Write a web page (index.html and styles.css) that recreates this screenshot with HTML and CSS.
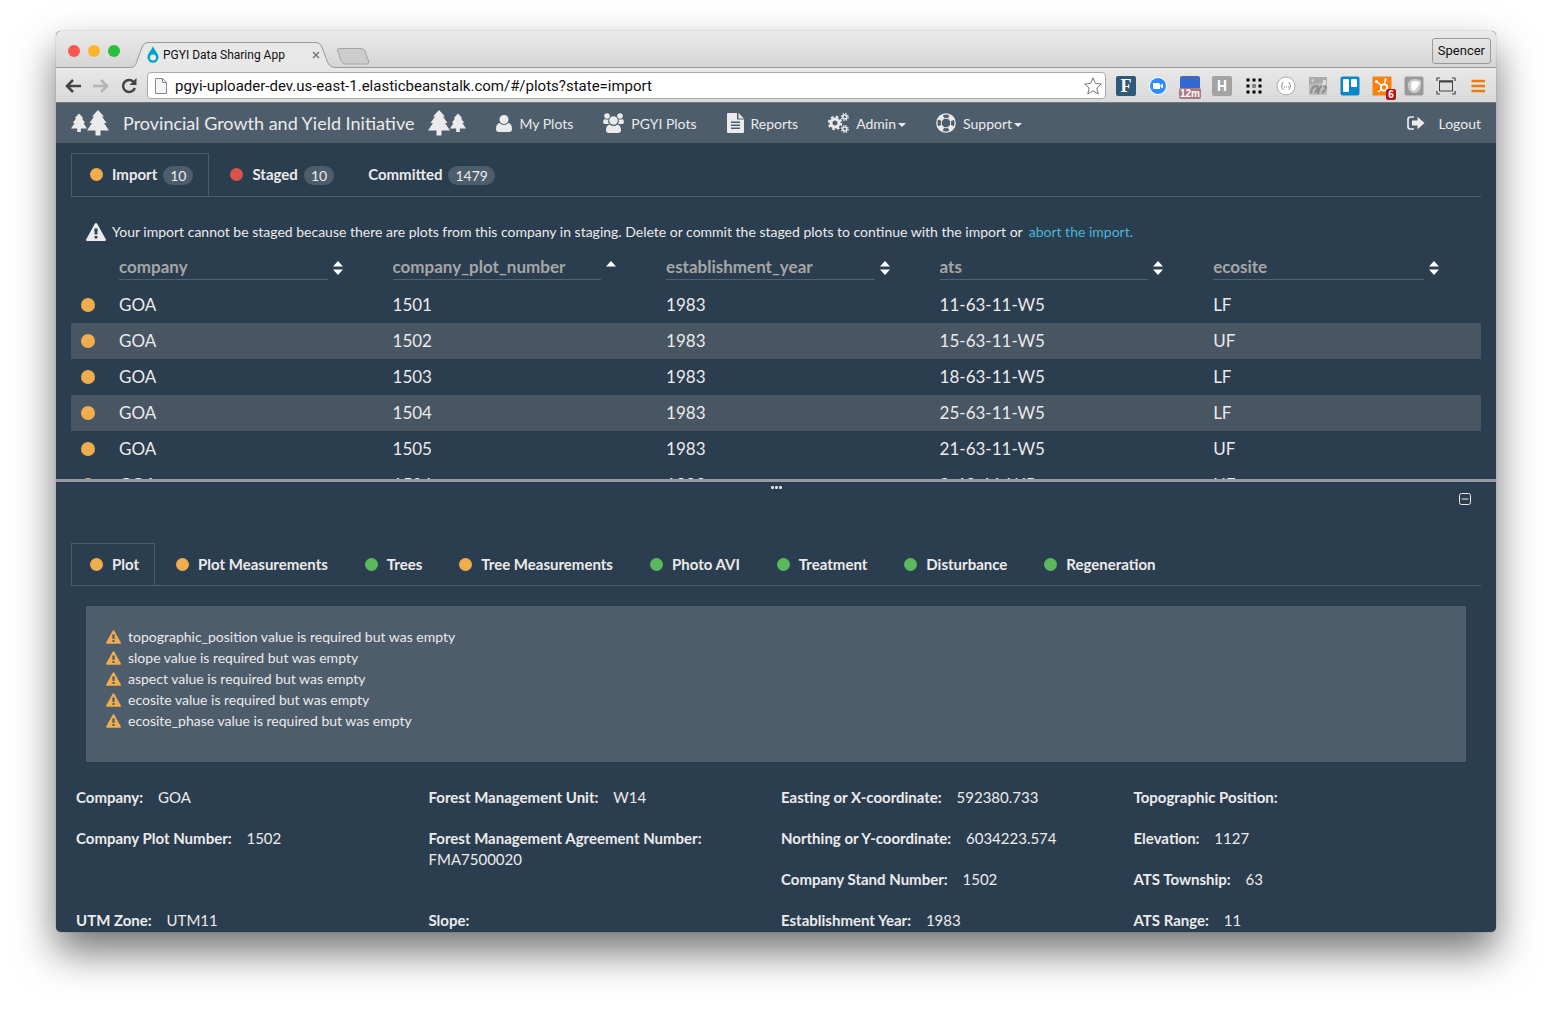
FILE: index.html
```html
<!DOCTYPE html>
<html lang="en">
<head>
<meta charset="utf-8">
<title>PGYI Data Sharing App</title>
<link rel="stylesheet" href="styles.css">
</head>
<body>
<svg class="defs" width="0" height="0" aria-hidden="true">
  <symbol id="tree" viewBox="0 0 22 26"><path d="M11 0 17 6.500H15L19.500 13H17L22 20.500H13.500V25.500H8.500V20.500H0L5 13H2.500L7 6.500H5Z"/></symbol>
  <symbol id="warn" viewBox="0 0 20 18"><path fill-rule="evenodd" d="M10 0Q10.800 0 11.300.9L19.800 16.300Q20.300 18 18.700 18H1.300Q-.3 18 .2 16.300L8.700.9Q9.200 0 10 0ZM8.300 5.500 8.700 11.500H11.300L11.700 5.500ZM8.600 13V15.600H11.400V13Z"/></symbol>
  <symbol id="sort" viewBox="0 0 10 14"><path d="M5 0 10 5.500H0ZM0 8.500H10L5 14Z"/></symbol>
  <symbol id="asc" viewBox="0 0 10 14"><path d="M5 0 10 5.500H0Z"/></symbol>
</svg>
<div class="window">
  <div class="titlebar">
    <div class="lights"><i class="light close"></i><i class="light min"></i><i class="light max"></i></div>
    <div class="browser-tab">
      <svg class="tab-shape" viewBox="0 0 208 26"><path d="M0 25.500C5 25.500 5.500 23 7 19L12.500 4Q14 .5 18 .5H186Q190 .5 191.500 4L198 21Q200 25.500 206 25.500V26H0Z" fill="#e8e8e8"/><path d="M0 25.500C5 25.500 5.500 23 7 19L12.500 4Q14 .5 18 .5H186Q190 .5 191.500 4L198 21Q200 25.500 206 25.500" fill="none" stroke="#999"/></svg>
      <svg width="12" height="17" viewBox="0 0 12 17"><path d="M6 0C7 4 11.500 7 11.500 11.300A5.500 5.500 0 0 1 .5 11.300C.5 7 5 4 6 0Z" fill="#00a3cc"/><circle cx="6" cy="11.500" r="3" fill="#eee"/></svg>
      <span class="tab-title">PGYI Data Sharing App</span>
      <button class="tab-close" aria-label="Close tab"><svg width="8" height="8" viewBox="0 0 8 8"><path d="M1 1 7 7M7 1 1 7" stroke="#777" stroke-width="1.500"/></svg></button>
    </div>
    <button class="new-tab" aria-label="New tab"><svg width="34" height="17" viewBox="0 0 34 17"><path d="M3 .5H25Q28 .5 29 3L32.500 13Q33 16 31 16H9Q6.500 16 5.500 13.500L1.500 3Q.5 .5 3 .5Z" fill="#ccc" stroke="#a3a3a3"/></svg></button>
    <button class="profile">Spencer</button>
  </div>
  <div class="toolbar">
    <div class="history">
      <button aria-label="Back"><svg width="16" height="14" viewBox="0 0 16 14"><path d="M8 1 2 7 8 13M2 7H16" fill="none" stroke="#444" stroke-width="2.500"/></svg></button>
      <button aria-label="Forward"><svg width="16" height="14" viewBox="0 0 16 14"><path d="M8 1 14 7 8 13M14 7H0" fill="none" stroke="#b5b5b5" stroke-width="2.500"/></svg></button>
      <button aria-label="Reload"><svg width="16" height="16" viewBox="0 0 16 16"><path d="M13 4.500A6 6 0 1 0 13.800 10" fill="none" stroke="#444" stroke-width="2.500"/><path d="M15.500 0V7H8.500Z" fill="#444"/></svg></button>
    </div>
    <div class="address">
      <svg width="12" height="16" viewBox="0 0 12 16"><path d="M.5.5H7.500L11.500 4.500V15.500H.5ZM7.500.5V4.500H11.500" fill="#f5f5f5" stroke="#888"/></svg>
      <input class="url" aria-label="Address" value="pgyi-uploader-dev.us-east-1.elasticbeanstalk.com/#/plots?state=import">
      <svg width="18" height="18" viewBox="0 0 18 18"><path d="M9 .8 11.400 6.500 17.400 7 12.800 11 14.200 17 9 13.700 3.800 17 5.200 11 .6 7 6.600 6.500Z" fill="#fff" stroke="#777"/></svg>
    </div>
    <div class="extensions">
      <span class="ext ext-f">F</span>
      <svg class="ext" viewBox="0 0 20 20"><circle cx="10" cy="10" r="9" fill="#fff"/><circle cx="10" cy="10" r="8" fill="#2d8cff"/><path d="M5 7H10.500Q12 7 12 8.500V13H6.500Q5 13 5 11.500ZM12.500 9 15 7.500V12.500L12.500 11Z" fill="#fff"/></svg>
      <span class="ext ext-cal"><span class="badge-cal">12m</span></span>
      <span class="ext ext-h">H</span>
      <svg class="ext" viewBox="0 0 20 20"><path d="M2.500 4H18M2.500 10H18M2.500 16H18" stroke="#000" stroke-width="3" stroke-dasharray="3 3"/><rect x="8.500" y="8.500" width="3" height="3" fill="#888"/></svg>
      <svg class="ext" viewBox="0 0 20 20"><circle cx="10" cy="10" r="9" fill="#fff" stroke="#aaa"/><path d="M7.500 6.500Q6 6.500 6 8.500T5 10Q6 10 6 11.500T7.500 13.500M12.500 6.500Q14 6.500 14 8.500T15 10Q14 10 14 11.500T12.500 13.500" fill="none" stroke="#888"/><path d="M8 11H13" stroke="#888" stroke-dasharray="1 1"/></svg>
      <svg class="ext" viewBox="0 0 20 20"><path d="M1 1H19V7L1 9Z" fill="#aaa"/><path d="M1 9 19 6V19H1Z" fill="#bbb"/><path d="M3 17Q4 10 8 10T7 17M10 18Q11 9 16 10T14 17" fill="none" stroke="#8c8c8c" stroke-width="2"/><path d="M3 4 6 3 5 6ZM15 4H18V8L14 11Z" fill="#ddd"/></svg>
      <svg class="ext" viewBox="0 0 20 20"><rect x=".5" y=".5" width="19" height="19" rx="2" fill="#0a86cd"/><rect x="3" y="3" width="6" height="13" rx="1" fill="#fff"/><rect x="11" y="3" width="6" height="8" rx="1" fill="#fff"/></svg>
      <span class="ext ext-hub"><svg viewBox="0 0 20 20" width="20" height="20"><rect x=".5" y=".5" width="19" height="19" fill="#f8820d"/><circle cx="12" cy="11.500" r="3.200" fill="none" stroke="#fff" stroke-width="1.800"/><path d="M12.500 8 13.500 4M9.500 9.500 5 6M9.500 13.500 6 16" stroke="#fff" stroke-width="1.500"/><circle cx="4.500" cy="5.500" r="1.500" fill="#fff"/><circle cx="13.500" cy="3.500" r="1.200" fill="#fff"/></svg><span class="badge-hub">6</span></span>
      <svg class="ext" viewBox="0 0 20 20"><rect x=".5" y=".5" width="19" height="19" rx="2" fill="#999"/><path d="M4 11Q3 3 11 3T17 9Q16 17 11 17Q5 17 4 11Z" fill="#ccc"/><path d="M7 11Q6 4 12 5T14 10Q11 16 8 14Z" fill="#fff"/></svg>
      <svg class="ext" viewBox="0 0 20 20"><rect x="3.500" y="5" width="13" height="10" fill="none" stroke="#444"/><path d="M3 5.500H17" stroke="#444" stroke-width="2"/><path d="M1 5V2H4M16 2H19V5M19 15V18H16M4 18H1V15" fill="none" stroke="#444" stroke-width="1.200"/></svg>
      <svg class="ext" viewBox="0 0 20 20"><path d="M3.500 5H17M3.500 10H17M3.500 15H17" stroke="#ee7a0c" stroke-width="2.500"/></svg>
    </div>
  </div>

  <nav class="navbar">
    <a class="brand" href="#">
      <span class="trees"><svg class="tree-sm"><use href="#tree"/></svg><svg class="tree-lg"><use href="#tree"/></svg></span>
      <span>Provincial Growth and Yield Initiative</span>
      <span class="trees"><svg class="tree-lg"><use href="#tree"/></svg><svg class="tree-sm"><use href="#tree"/></svg></span>
    </a>
    <a class="nav-link" href="#"><svg width="16" height="17" viewBox="0 0 16 17"><circle cx="8" cy="4.500" r="4.500"/><path d="M3.500 8Q8 12 12.500 8Q16 9 16 14Q16 17 13 17H3Q0 17 0 14Q0 9 3.500 8Z"/></svg>My Plots</a>
    <a class="nav-link" href="#"><svg width="21" height="20" viewBox="0 0 21 20"><circle cx="4" cy="3" r="2.800"/><circle cx="17" cy="3" r="2.800"/><circle cx="10.500" cy="7.500" r="4.300"/><path d="M2 6Q4 7.500 5.500 6Q4.500 9 6 11H2Q0 11 0 9Q0 6.500 2 6ZM19 6Q17 7.500 15.500 6Q16.500 9 15 11H19Q21 11 21 9Q21 6.500 19 6ZM6.500 11.500Q10.500 14.500 14.500 11.500Q18 12.500 18 17Q18 20 15 20H6Q3 20 3 17Q3 12.500 6.500 11.500Z"/></svg>PGYI Plots</a>
    <a class="nav-link" href="#"><svg width="17" height="20" viewBox="0 0 17 20"><path fill-rule="evenodd" d="M1 0H10V6.500H17V19Q17 20 16 20H1Q0 20 0 19V1Q0 0 1 0ZM4 8.500V10H13V8.500ZM4 11.500V13H13V11.500ZM4 14.500V16H13V14.500ZM11.500 0 17 5.500H11.500Z"/></svg>Reports</a>
    <a class="nav-link" href="#"><svg width="21" height="20" viewBox="0 0 21 20"><g fill="none" stroke="#ebebeb"><circle cx="7" cy="10" r="4" stroke-width="3"/><circle cx="7" cy="10" r="6.200" stroke-width="2" stroke-dasharray="2.600 2.270"/><circle cx="16.800" cy="4" r="2" stroke-width="1.600"/><circle cx="16.800" cy="4" r="3.400" stroke-width="1.200" stroke-dasharray="1.500 1.170"/><circle cx="16.800" cy="16" r="2" stroke-width="1.600"/><circle cx="16.800" cy="16" r="3.400" stroke-width="1.200" stroke-dasharray="1.500 1.170"/></g></svg><span>Admin<i class="caret"></i></span></a>
    <a class="nav-link" href="#"><svg width="20" height="20" viewBox="0 0 20 20"><g fill="none" stroke="#ebebeb"><circle cx="10" cy="10" r="9.200" stroke-width="1.300"/><circle cx="10" cy="10" r="4.800" stroke-width="1"/><circle cx="10" cy="10" r="7" stroke-width="4.400" stroke-dasharray="5.500 5.500" stroke-dashoffset="-2.700"/></g></svg><span>Support<i class="caret"></i></span></a>
    <a class="nav-link logout" href="#"><svg width="18" height="14" viewBox="0 0 18 14"><path d="M7 1H3.500Q1 1 1 3.500V10.500Q1 13 3.500 13H7" fill="none" stroke="#ebebeb" stroke-width="1.700"/><path d="M5 4.500H10.500V.8L17.500 7 10.500 13.200V9.500H5Z"/></svg>Logout</a>
  </nav>

  <section class="pane list-pane">
    <div class="tabs">
      <a class="tab active" href="#"><i class="dot orange"></i>Import<span class="badge">10</span></a>
      <a class="tab" href="#"><i class="dot red"></i>Staged<span class="badge">10</span></a>
      <a class="tab plain" href="#">Committed<span class="badge">1479</span></a>
    </div>
    <p class="notice"><svg class="notice-icon"><use href="#warn"/></svg><span>Your import cannot be staged because there are plots from this company in staging. Delete or commit the staged plots to continue with the import or</span><a href="#">abort the import.</a></p>
    <table class="plots">
      <colgroup><col class="status-col"><col class="data-col"><col class="data-col"><col class="data-col"><col class="data-col"><col></colgroup>
      <thead><tr><th></th>
        <th><div class="filter"><input aria-label="company" placeholder="company"><svg><use href="#sort"/></svg></div></th>
        <th><div class="filter"><input aria-label="company_plot_number" placeholder="company_plot_number"><svg><use href="#asc"/></svg></div></th>
        <th><div class="filter"><input aria-label="establishment_year" placeholder="establishment_year"><svg><use href="#sort"/></svg></div></th>
        <th><div class="filter"><input aria-label="ats" placeholder="ats"><svg><use href="#sort"/></svg></div></th>
        <th><div class="filter"><input aria-label="ecosite" placeholder="ecosite"><svg><use href="#sort"/></svg></div></th>
      </tr></thead>
      <tbody>
        <tr><td><i class="dot orange big"></i></td><td>GOA</td><td>1501</td><td>1983</td><td>11-63-11-W5</td><td>LF</td></tr>
        <tr><td><i class="dot orange big"></i></td><td>GOA</td><td>1502</td><td>1983</td><td>15-63-11-W5</td><td>UF</td></tr>
        <tr><td><i class="dot orange big"></i></td><td>GOA</td><td>1503</td><td>1983</td><td>18-63-11-W5</td><td>LF</td></tr>
        <tr><td><i class="dot orange big"></i></td><td>GOA</td><td>1504</td><td>1983</td><td>25-63-11-W5</td><td>LF</td></tr>
        <tr><td><i class="dot orange big"></i></td><td>GOA</td><td>1505</td><td>1983</td><td>21-63-11-W5</td><td>UF</td></tr>
        <tr class="cut"><td><i class="dot orange big"></i></td><td>GOA</td><td>1504</td><td>1983</td><td>2-63-11-W5</td><td>UF</td></tr>
      </tbody>
    </table>
  </section>

  <section class="pane detail-pane">
    <div class="grip"><i></i><i></i><i></i></div>
    <div class="pane-tools"><button aria-label="Collapse"><svg width="12" height="12" viewBox="0 0 12 12"><rect x=".5" y=".5" width="11" height="11" rx="2" fill="none" stroke="#ebebeb"/><path d="M2.500 6H9.500" stroke="#ebebeb"/></svg></button></div>
    <div class="tabs">
      <a class="tab active" href="#"><i class="dot orange"></i>Plot</a>
      <a class="tab" href="#"><i class="dot orange"></i>Plot Measurements</a>
      <a class="tab" href="#"><i class="dot green"></i>Trees</a>
      <a class="tab" href="#"><i class="dot orange"></i>Tree Measurements</a>
      <a class="tab" href="#"><i class="dot green"></i>Photo AVI</a>
      <a class="tab" href="#"><i class="dot green"></i>Treatment</a>
      <a class="tab" href="#"><i class="dot green"></i>Disturbance</a>
      <a class="tab" href="#"><i class="dot green"></i>Regeneration</a>
    </div>
    <ul class="warnings">
      <li><svg><use href="#warn"/></svg>topographic_position value is required but was empty</li>
      <li><svg><use href="#warn"/></svg>slope value is required but was empty</li>
      <li><svg><use href="#warn"/></svg>aspect value is required but was empty</li>
      <li><svg><use href="#warn"/></svg>ecosite value is required but was empty</li>
      <li><svg><use href="#warn"/></svg>ecosite_phase value is required but was empty</li>
    </ul>
    <dl class="fields">
      <div><dt>Company:</dt> <dd>GOA</dd></div>
      <div><dt>Forest Management Unit:</dt> <dd>W14</dd></div>
      <div><dt>Easting or X-coordinate:</dt> <dd>592380.733</dd></div>
      <div><dt>Topographic Position:</dt> <dd></dd></div>
      <div class="tall"><dt>Company Plot Number:</dt> <dd>1502</dd></div>
      <div class="tall"><dt>Forest Management Agreement Number:</dt> <dd>FMA7500020</dd></div>
      <div><dt>Northing or Y-coordinate:</dt> <dd>6034223.574</dd></div>
      <div><dt>Elevation:</dt> <dd>1127</dd></div>
      <div><dt>Company Stand Number:</dt> <dd>1502</dd></div>
      <div><dt>ATS Township:</dt> <dd>63</dd></div>
      <div><dt>UTM Zone:</dt> <dd>UTM11</dd></div>
      <div><dt>Slope:</dt> <dd></dd></div>
      <div><dt>Establishment Year:</dt> <dd>1983</dd></div>
      <div><dt>ATS Range:</dt> <dd>11</dd></div>
    </dl>
  </section>
</div>
</body>
</html>
```
FILE: styles.css
```css
* { box-sizing: border-box; }
body {
  margin: 0;
  height: 100vh;
  padding: 31px 56px 80px;
  background: #fff;
  font: 15px/21px Lato, "Open Sans", sans-serif;
  color: #ebebeb;
  overflow: hidden;
}
a { color: inherit; text-decoration: none; }
button { padding: 0; border: 0; background: none; display: flex; color: inherit; }
input { min-width: 0; padding: 0; border: 0; background: none; outline: 0; }
svg { flex: none; fill: currentColor; }
.defs { position: absolute; }

.window {
  height: 100%;
  display: flex;
  flex-direction: column;
  border-radius: 5px;
  overflow: hidden;
  background: #2b3e50;
  box-shadow: 0 0 1px rgba(0, 0, 0, .6), 0 20px 40px rgba(0, 0, 0, .55);
}

/* Browser frame */
.titlebar {
  flex: none;
  height: 37px;
  display: flex;
  align-items: flex-end;
  background: linear-gradient(#ebebeb, #d5d5d5);
  border-bottom: 1px solid #999;
}
.lights { display: flex; gap: 8px; padding: 0 10px 10px 12px; }
.light { width: 12px; height: 12px; border-radius: 50%; }
.close { background: #fc5650; }
.min { background: #fdb52a; }
.max { background: #26c03c; }
.browser-tab {
  position: relative;
  width: 206px;
  height: 25px;
  display: flex;
  align-items: center;
  gap: 4px;
  padding: 0 16px 0 17px;
}
.tab-shape { position: absolute; left: 0; top: 0; width: 208px; height: 26px; }
.browser-tab > :not(.tab-shape) { position: relative; }
.tab-title { flex: 1; font: 12px/16px Roboto, sans-serif; color: #111; white-space: nowrap; }
.new-tab { padding-bottom: 2px; }
.profile {
  margin: 0 5px 3px auto;
  height: 26px;
  padding: 0 5px;
  align-items: center;
  border: 1px solid #999;
  border-radius: 3px;
  font: 13px/16px Roboto, sans-serif;
  color: #111;
}
.toolbar {
  flex: none;
  height: 35px;
  display: flex;
  align-items: center;
  gap: 10px;
  padding: 1px 8px 0 9px;
  background: linear-gradient(#e8e8e8, #d9d9d9);
  border-bottom: 1px solid #777;
}
.history { display: flex; align-items: center; gap: 12px; }
.address {
  flex: 1;
  height: 27px;
  display: flex;
  align-items: center;
  gap: 8px;
  padding: 0 3px 0 7px;
  background: #fff;
  border: 1px solid #aaa;
  border-radius: 4px;
}
.url { flex: 1; font: 15px/20px Roboto, sans-serif; color: #111; }
.extensions { display: flex; gap: 12px; }
.ext { position: relative; width: 20px; height: 20px; border-radius: 2px; text-align: center; }
.ext-f { background: #2f5877; color: #fff; font: bold 18px/20px "Liberation Serif", serif; }
.ext-h { background: #a3a3a3; color: #fff; font: bold 14px/20px Roboto, sans-serif; }
.ext-cal { background: linear-gradient(#4468b4 15%, #3367d6 15% 60%, transparent 60%); }
.badge-cal, .badge-hub { position: absolute; border-radius: 2px; color: #fff; font: bold 10px/11px "Liberation Sans", sans-serif; }
.badge-cal { left: -1px; top: 12px; width: 22px; background: #a77b82; }
.badge-hub { left: 14px; top: 13px; width: 10px; background: #b8141c; }

/* Application header */
.navbar {
  flex: none;
  height: 40px;
  display: flex;
  align-items: center;
  gap: 30px;
  padding: 0 15px;
  background: #4e5d6c;
  font-size: 14px;
  white-space: nowrap;
}
.brand { display: flex; align-items: center; gap: 14px; font-size: 18px; }
.trees { display: flex; align-items: center; }
.tree-sm { width: 16px; height: 20px; }
.tree-lg { width: 22px; height: 26px; }
.nav-link { display: flex; align-items: center; gap: 7px; }
.logout { margin-left: auto; gap: 13px; }
.caret {
  display: inline-block;
  vertical-align: middle;
  margin-left: 2px;
  border: 4px solid transparent;
  border-top-color: currentColor;
  border-bottom: 0;
}

.pane { overflow: hidden; padding: 0 15px; }
.list-pane { flex: 0 1 336px; padding-top: 10px; }
.detail-pane { flex: 1; min-height: 0; border-top: 3px solid #949ba5; }

/* Tabs */
.tabs { display: flex; gap: 2px; border-bottom: 1px solid #4e5d6c; white-space: nowrap; }
.tab {
  display: flex;
  align-items: center;
  height: 42px;
  padding: 0 15px 0 18px;
  border: 1px solid transparent;
  border-bottom: 0;
  font-weight: 700;
}
.list-pane .tab { height: 43px; }
.tab.plain { padding-left: 15px; }
.tab.active { margin-bottom: -1px; border-color: #4e5d6c; background: #2b3e50; }
.tab.active, .list-pane .tab { padding-bottom: 1px; }
.dot { display: block; flex: none; width: 13px; height: 13px; margin-right: 9px; border-radius: 50%; }
.big { width: 14px; height: 14px; margin: 0 auto 0 2px; }
.orange { background: #f0ad4e; }
.red { background: #d9534f; }
.green { background: #5cb85c; }
.badge { margin: 2px 0 0 6px; padding: 0 7px; border-radius: 10px; background: #4e5d6c; font-size: 14px; font-weight: 400; line-height: 19px; }

.notice { display: flex; align-items: center; gap: 6px; margin: 24px 15px 6px; font-size: 14px; white-space: nowrap; }
.notice-icon { width: 20px; height: 18px; }
.notice a { color: #4ab5d8; }

/* Plot table */
.plots { width: 100%; table-layout: fixed; border-collapse: collapse; font-size: 17px; }
.status-col { width: 40px; }
.data-col { width: 19.4%; }
.plots td, .plots th { height: 36px; padding: 0 8px; text-align: left; }
.plots th { height: 39px; }
.plots td:not(:first-child) { padding-bottom: 2px; }
.plots tbody tr:nth-child(even):not(.cut) { background: #485563; }
.filter { display: flex; align-items: center; gap: 5px; padding-right: 34px; }
.filter input { flex: 1; height: 25px; padding-bottom: 2px; border-bottom: 1px solid #4e6271; font: 700 17px/22px Lato, sans-serif; color: #ebebeb; }
.filter input::placeholder { color: #a5a6a6; opacity: 1; }
.filter svg { width: 10px; height: 14px; color: #fff; }

/* Detail pane */
.grip { display: flex; justify-content: center; gap: 1px; padding-top: 4px; }
.grip i { width: 3px; height: 3px; background: #ddd; border-radius: 1px; }
.pane-tools { display: flex; justify-content: flex-end; padding: 4px 10px 38px; }
.warnings { list-style: none; margin: 20px 15px 25px; padding: 20px 20px 31px; background: #4e5d6c; font-size: 14px; }
.warnings li { display: flex; align-items: center; gap: 7px; }
.warnings svg { width: 15px; height: 14px; color: #f0ad4e; }
.fields { display: grid; grid-template-columns: repeat(4, 1fr); grid-auto-rows: 21px; row-gap: 20px; margin: 0; }
.fields div { padding: 0 5px; }
.tall { grid-row: span 2; }
.fields dt { display: inline; margin-right: 11px; font-weight: 700; }
.fields dd { display: inline; margin: 0; }
```
